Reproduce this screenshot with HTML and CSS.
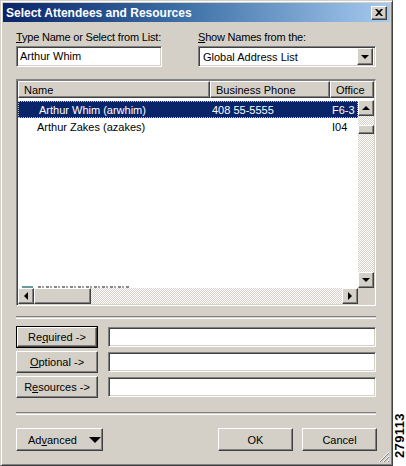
FILE: index.html
```html
<!DOCTYPE html>
<html lang="en">
<head>
  <meta charset="UTF-8">
  <title>Select Attendees and Resources</title>
  <link rel="stylesheet" href="styles.css">
</head>
<body>
  <div class="page">
    <div class="window">
      <div class="titlebar">
        <span class="title">Select Attendees and Resources</span>
        <span class="close raised">
          <svg width="8" height="7" viewBox="0 0 8 7"><path d="M0 0h2l2 2 2-2h2L5 3.5 8 7H6L4 5 2 7H0l3-3.5z" fill="#000"/></svg>
        </span>
      </div>

      <div class="content">
        <div class="top-row">
          <div class="field col-name">
            <label><u>T</u>ype Name or Select from List:</label>
            <div class="textbox sunken">Arthur Whim</div>
          </div>
          <div class="field col-book">
            <label><u>S</u>how Names from the:</label>
            <div class="combo sunken">
              <span>Global Address List</span>
              <span class="drop raised"><i class="tri-down"></i></span>
            </div>
          </div>
        </div>

        <div class="listbox sunken">
          <div class="list-header">
            <div class="hcell raised h-name">Name</div>
            <div class="hcell raised h-phone">Business Phone</div>
            <div class="hcell raised h-office">Office</div>
          </div>
          <div class="list-area">
            <div class="list-main">
              <div class="rows">
                <div class="row selected">
                  <span class="c-name">Arthur Whim (arwhim)</span>
                  <span class="c-phone">408 55-5555</span>
                  <span class="c-office">F6-3</span>
                </div>
                <div class="row">
                  <span class="c-name alt">Arthur Zakes (azakes)</span>
                  <span class="c-phone"></span>
                  <span class="c-office">I04</span>
                </div>
                <div class="row-cut"><span class="cut-icon"></span><span class="cut-text"></span></div>
              </div>
              <div class="vscroll">
                <span class="sbtn raised"><i class="tri-up"></i></span>
                <span class="track">
                  <span class="vthumb raised"></span>
                </span>
                <span class="sbtn raised"><i class="tri-down"></i></span>
              </div>
            </div>
            <div class="list-bottom">
              <div class="hscroll">
                <span class="sbtn raised"><i class="tri-left"></i></span>
                <span class="htrack">
                  <span class="hthumb raised"></span>
                </span>
                <span class="sbtn raised"><i class="tri-right"></i></span>
              </div>
              <span class="corner"></span>
            </div>
          </div>
        </div>

        <div class="sep sep-1"></div>

        <div class="recipients">
          <div class="recip-row">
            <button class="btn default"><span class="inner">Re<u>q</u>uired -&gt;</span></button>
            <div class="recip-box sunken"></div>
          </div>
          <div class="recip-row">
            <button class="btn raised"><u>O</u>ptional -&gt;</button>
            <div class="recip-box sunken"></div>
          </div>
          <div class="recip-row">
            <button class="btn raised">R<u>e</u>sources -&gt;</button>
            <div class="recip-box sunken"></div>
          </div>
        </div>

        <div class="sep sep-2"></div>

        <div class="actions">
          <button class="btn raised advanced"><span>Ad<u>v</u>anced</span> <i class="tri-big"></i></button>
          <div class="spacer"></div>
          <button class="btn raised ok">OK</button>
          <button class="btn raised cancel">Cancel</button>
        </div>
      </div>

      <svg class="grip" width="12" height="12" viewBox="0 0 12 12">
        <path d="M11 1L1 11M11 5L5 11M11 9L9 11" stroke="#fff" stroke-width="1"/>
        <path d="M11 2L2 11M11 6L6 11M11 10L10 11" stroke="#808080" stroke-width="1"/>
      </svg>
    </div>
    <div class="side">
      <span class="figno">279113</span>
    </div>
  </div>
</body>
</html>
```

FILE: styles.css
```css
body {
  margin: 0;
  background: #fff;
  font-family: "Liberation Sans", Arial, sans-serif;
  font-size: 11px;
  color: #000;
}
.page {
  display: flex;
  width: 406px;
  height: 466px;
}
.raised {
  background: #d4d0c8;
  border: 1px solid;
  border-color: #fff #404040 #404040 #fff;
  box-shadow: inset -1px -1px #808080;
  box-sizing: border-box;
}
.sunken {
  background: #fff;
  border: 1px solid;
  border-color: #808080 #fff #fff #808080;
  box-shadow: inset 1px 1px #404040, inset -1px -1px #d4d0c8;
  box-sizing: border-box;
}
.window {
  position: relative;
  width: 393px;
  height: 466px;
  box-sizing: border-box;
  background: #d4d0c8;
  border: 1px solid;
  border-color: #d4d0c8 #404040 #404040 #d4d0c8;
  box-shadow: inset 1px 1px #fff, inset -1px -1px #808080;
  padding: 2px;
  display: flex;
  flex-direction: column;
}
.titlebar {
  height: 19px;
  flex: none;
  background: linear-gradient(90deg, #0a246a, #3a6ea5 45%, #a6caf0);
  display: flex;
  align-items: center;
  justify-content: space-between;
  padding: 0 3px 0 3px;
}
.title {
  color: #fff;
  font-weight: bold;
  font-size: 12px;
}
.close {
  width: 16px;
  height: 14px;
  display: flex;
  align-items: center;
  justify-content: center;
}
.content {
  padding: 9px 13px 0 13px;
}
.top-row {
  display: flex;
  gap: 36px;
}
.field label {
  display: block;
  line-height: 13px;
  margin-bottom: 2px;
  white-space: nowrap;
  letter-spacing: -0.2px;
}
.col-name {
  width: 146px;
}
.col-book {
  width: 178px;
}
.textbox {
  height: 21px;
  padding: 3px 3px;
  line-height: 13px;
}
.combo {
  height: 21px;
  display: flex;
  align-items: center;
  justify-content: space-between;
  padding: 2px 2px 2px 4px;
}
.drop {
  width: 16px;
  height: 17px;
  display: flex;
  align-items: center;
  justify-content: center;
}
i.tri-down, i.tri-up, i.tri-left, i.tri-right {
  display: block;
  width: 0;
  height: 0;
  border: 4px solid transparent;
}
.tri-down { border-top-color: #000 !important; border-bottom-width: 0 !important; }
.tri-up { border-bottom-color: #000 !important; border-top-width: 0 !important; }
.tri-left { border-right-color: #000 !important; border-left-width: 0 !important; }
.tri-right { border-left-color: #000 !important; border-right-width: 0 !important; }

.listbox {
  margin-top: 12px;
  width: 360px;
  height: 227px;
  border-width: 2px 1px 1px 1px;
  box-shadow: inset 1px 0 #404040, inset -1px -1px #d4d0c8;
  display: flex;
  flex-direction: column;
  padding: 0 1px 1px 1px;
}
.list-header {
  display: flex;
  height: 17px;
  flex: none;
}
.hcell {
  padding: 2px 5px;
  line-height: 12px;
  white-space: nowrap;
  overflow: hidden;
}
.h-name { width: 192px; }
.h-phone { width: 120px; }
.h-office { flex: 1; }
.list-area {
  flex: 1;
  display: flex;
  flex-direction: column;
  padding-top: 2px;
  background: #fff;
}
.list-main {
  flex: 1;
  display: flex;
}
.rows {
  flex: 1;
  position: relative;
  padding-top: 1px;
}
.row {
  display: flex;
  height: 17px;
  align-items: center;
  white-space: nowrap;
}
.row.selected {
  background: #0a246a;
  color: #fff;
  outline: 1px dotted #c0c0c0;
  outline-offset: -1px;
}
.c-name { width: 192px; padding-left: 21px; box-sizing: border-box; }
.c-name.alt { padding-left: 19px; }
.c-phone { width: 120px; padding-left: 2px; box-sizing: border-box; }
.c-office { padding-left: 2px; }
.row-cut {
  position: absolute;
  left: 4px;
  bottom: 0;
  height: 2px;
  display: flex;
  gap: 5px;
}
.cut-icon {
  width: 11px;
  background: #6a9a9a;
}
.cut-text {
  width: 92px;
  background: repeating-linear-gradient(90deg, #222 0 3px, transparent 3px 4px, #555 4px 6px, transparent 6px 8px);
  opacity: 0.55;
}
.vscroll {
  width: 16px;
  display: flex;
  flex-direction: column;
}
.sbtn {
  width: 16px;
  height: 16px;
  flex: none;
  display: flex;
  align-items: center;
  justify-content: center;
}
.track, .htrack {
  flex: 1;
  background: repeating-conic-gradient(#d4d0c8 0 25%, #fff 0 50%) 0 0 / 2px 2px;
}
.vthumb {
  display: block;
  height: 9px;
  margin-top: 9px;
}
.list-bottom {
  display: flex;
  height: 16px;
}
.hscroll {
  flex: 1;
  display: flex;
}
.htrack {
  display: flex;
}
.hthumb {
  display: block;
  width: 57px;
}
.corner {
  width: 16px;
  background: #d4d0c8;
}

.sep {
  height: 1px;
  border-top: 1px solid #808080;
  border-bottom: 1px solid #fff;
  width: 360px;
}
.sep-1 { margin-top: 10px; }
.sep-2 { margin-top: 14px; }

.recipients {
  margin-top: 7px;
  display: flex;
  flex-direction: column;
  gap: 3px;
}
.recip-row {
  display: flex;
  align-items: center;
  gap: 10px;
}
.btn {
  font-family: "Liberation Sans", Arial, sans-serif;
  font-size: 11px;
  color: #000;
  padding: 0;
  height: 22px;
  width: 82px;
  text-align: center;
}
.btn.default {
  background: #d4d0c8;
  border: 1px solid #000;
  padding: 0;
}
.btn.default .inner {
  display: flex;
  align-items: center;
  justify-content: center;
  height: 100%;
  box-sizing: border-box;
  border: 1px solid;
  border-color: #fff #404040 #404040 #fff;
  box-shadow: inset -1px -1px #808080;
}
.recip-box {
  width: 268px;
  height: 20px;
}
.actions {
  margin-top: 13px;
  display: flex;
  width: 361px;
}
.spacer { flex: 1; }
.advanced {
  width: 87px;
  height: 23px;
  display: flex;
  align-items: center;
  justify-content: flex-start;
  padding-left: 11px;
  gap: 12px;
}
i.tri-big {
  display: block;
  width: 0;
  height: 0;
  border-left: 6px solid transparent;
  border-right: 6px solid transparent;
  border-top: 6px solid #000;
}
.ok, .cancel {
  width: 75px;
  height: 23px;
}
.cancel { margin-left: 9px; }
.grip {
  position: absolute;
  right: 2px;
  bottom: 2px;
}
.side {
  flex: 1;
  position: relative;
}
.figno {
  position: absolute;
  left: 0;
  top: 413px;
  writing-mode: vertical-rl;
  transform: rotate(180deg);
  font-size: 13px;
  line-height: 13px;
  font-weight: bold;
  letter-spacing: 0.4px;
}
```
